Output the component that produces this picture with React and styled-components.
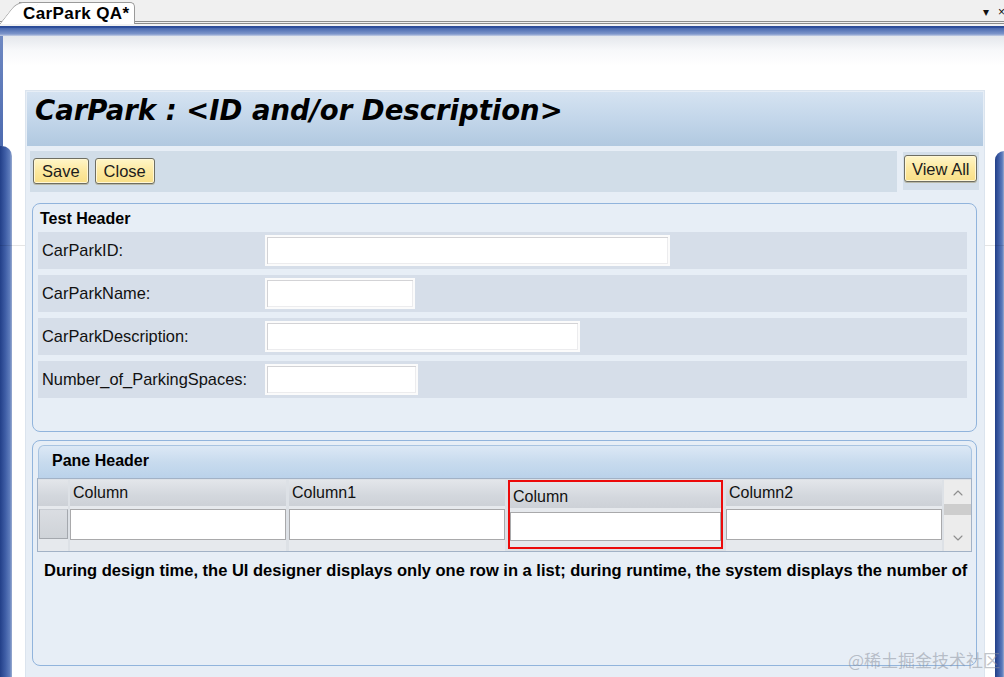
import React from "react";
import styled, { createGlobalStyle } from "styled-components";
import { ChevronUp, ChevronDown } from "lucide-react";

const GlobalStyle = createGlobalStyle`
  html, body {
    margin: 0;
    padding: 0;
  }
  body {
    width: 1004px;
    height: 677px;
    overflow: hidden;
    background: #fff;
    font-family: "Liberation Sans", Arial, sans-serif;
  }
  * {
    box-sizing: border-box;
  }
`;

const Screen = styled.div`
  position: relative;
  display: flex;
  flex-direction: column;
  height: 677px;
  overflow: hidden;
`;

const TabBar = styled.div`
  flex: none;
  height: 24px;
  padding-top: 2px;
  display: flex;
  align-items: flex-end;
  background: #f0f0f0;
  border-bottom: 3px double #8c8c8c;
`;

const Tab = styled.div`
  position: relative;
  z-index: 0;
  height: 22px;
  margin-left: 19px;
  margin-bottom: -3px;
  padding: 0 5px 0 4px;
  background: #fff;
  border: 1px solid #9a9a9a;
  border-left: none;
  border-bottom: none;
  border-radius: 0 5px 0 0;
  font-size: 17px;
  font-weight: bold;
  line-height: 22px;
  color: #000;
  letter-spacing: 0.4px;

  &::before {
    content: "";
    position: absolute;
    z-index: -1;
    left: -11px;
    top: -1px;
    bottom: 0;
    width: 22px;
    background: #fff;
    border-left: 1px solid #9a9a9a;
    border-top: 1px solid #9a9a9a;
    border-radius: 7px 0 0 0;
    transform: skewX(-38deg);
  }
`;

const TabControls = styled.div`
  margin-left: auto;
  align-self: center;
  margin-right: -4px;
  font-size: 12px;
  color: #111;
  letter-spacing: 3px;
  white-space: nowrap;
`;

const TopBand = styled.div`
  flex: none;
  height: 12px;
  background: linear-gradient(
    to bottom,
    #f2f2f2 0,
    #f2f2f2 2px,
    #2b4a96 2px,
    #2f4f9b 4px,
    #4767ae 4px,
    #7e96cb 10px,
    #c6cfe6 12px
  );
`;

const Body = styled.div`
  flex: 1;
  display: flex;
  min-height: 0;
  background: linear-gradient(to bottom, #e4e7ec 0, #f7f8fa 14px, #fff 30px);
`;

const LeftRail = styled.div`
  flex: none;
  width: 12px;
  display: flex;
  flex-direction: column;
`;

const RailNeck = styled.div`
  flex: none;
  width: 3px;
  height: 110px;
  background: linear-gradient(to bottom, #6e88c2, #4d6bb0);
`;

const RailBody = styled.div`
  flex: 1;
  background: linear-gradient(to right, #223f88, #3f5ea6 45%, #5d7bbb 80%, #9aacd0);
  border-radius: ${(p) => (p.$side === "left" ? "0 10px 0 0" : "10px 0 0 0")};
`;

const RightRail = styled.div`
  flex: none;
  width: 9px;
  padding-top: 115px;
  display: flex;
  flex-direction: column;
`;

const Main = styled.div`
  flex: 1;
  min-width: 0;
  padding: 54px 10px 0 13px;
`;

const Panel = styled.div`
  position: relative;
  z-index: 1;
  height: 100%;
  padding: 1px;
  background: #e7eef6;
  border: 1px solid #dbe4ee;
  border-bottom: none;
  display: flex;
  flex-direction: column;
`;

const TitleBar = styled.div`
  flex: none;
  height: 54px;
  padding: 1px 0 0 8px;
  background: linear-gradient(to bottom, #d5e3f1, #c3d6ea 50%, #b1c9e0);
`;

const Title = styled.h1`
  margin: 0;
  font-family: "DejaVu Sans", Verdana, sans-serif;
  font-size: 27.5px;
  line-height: 34px;
  font-weight: bold;
  font-style: italic;
  color: #000;
  white-space: nowrap;
`;

const ToolbarRow = styled.div`
  flex: none;
  display: flex;
  margin: 5px 4px 0 3px;
`;

const ActionsBar = styled.div`
  flex: 1;
  height: 41px;
  padding: 7px 3px;
  display: flex;
  align-items: flex-start;
  gap: 6px;
  background: #d1dde8;
`;

const SideBar = styled.div`
  flex: none;
  width: 76px;
  height: 38px;
  margin: 1px 0 0 6px;
  padding: 3px 1px;
  background: #d4dfea;
`;

const Button = styled.button`
  height: ${(p) => (p.$tall ? "27px" : "26px")};
  padding: 0 ${(p) => (p.$tall ? "7px" : "8px")};
  border: 1px solid #6e6e62;
  border-radius: 3px;
  background: linear-gradient(to bottom, #fff6c8, #fde9a0 50%, #f9df86);
  box-shadow: inset 0 0 0 1px #fff7d6, 0 1px 0 #b9b9a8;
  font-family: "Liberation Sans", Arial, sans-serif;
  font-size: 16.5px;
  line-height: 22px;
  color: #1c1c1c;
  cursor: pointer;
`;

const Groups = styled.div`
  flex: 1;
  display: flex;
  flex-direction: column;
  gap: 8px;
  margin: 11px 6px 0 5px;
`;

const Group = styled.section`
  flex: none;
  border: 1px solid #91b4dc;
  border-radius: 8px;
  background: #e7eef6;
  ${(p) => (p.$height ? `height: ${p.$height}px;` : "")}
`;

const FormGroup = styled(Group)`
  padding: 5px 9px 33px 5px;
`;

const GroupTitle = styled.div`
  margin: 0 0 3px 2px;
  font-size: 16px;
  line-height: 20px;
  font-weight: bold;
  color: #000;
`;

const Rows = styled.div`
  display: flex;
  flex-direction: column;
  gap: 6px;
`;

const FieldRow = styled.div`
  display: flex;
  align-items: center;
  height: 37px;
  background: #d6dee9;
`;

const FieldLabel = styled.label`
  flex: none;
  width: 227px;
  padding-left: 4px;
  font-size: 16.4px;
  color: #111;
`;

const TextInput = styled.input`
  height: 31px;
  width: ${(p) => p.$w}px;
  border: 2px solid #fbfbfb;
  background: #fff;
  box-shadow: inset 1px 1px 0 #d3d3d6, inset -1px -1px 0 #ececee;
  outline: none;
  font-family: inherit;
  font-size: 15px;
`;

const PaneHeader = styled.div`
  margin: 4px 4px 0 5px;
  height: 33px;
  padding-left: 13px;
  border: 1px solid #a9c4e1;
  border-bottom: none;
  border-radius: 6px 6px 0 0;
  background: linear-gradient(to bottom, #dce8f5, #c8dbee 50%, #bad2ea);
  font-size: 16px;
  font-weight: bold;
  line-height: 30px;
  color: #000;
`;

const Table = styled.div`
  display: flex;
  height: 74px;
  margin: 0 4px 0 4px;
  border: 1px solid #a2b2c6;
  padding-top: 1px;
  background: #dde1e6;
`;

const Column = styled.div`
  flex: none;
  width: ${(p) => p.$w}px;
  margin-left: ${(p) => p.$gap}px;
  display: flex;
  flex-direction: column;
  gap: 3px;
  padding-bottom: 10px;
  background: #e6e9ed;
  ${(p) =>
    p.$selected &&
    `
    align-self: flex-start;
    border: 2px solid #ec0a0a;
    gap: 4px;
    padding-bottom: 6px;
  `}
`;

const HeaderCell = styled.div`
  height: 26px;
  padding: ${(p) => (p.$selected ? "4px" : "2px")} 0 0 3px;
  background: linear-gradient(to bottom, #e3e6ea, #d3d7dd 60%, #cdd1d7);
  font-size: 16px;
  line-height: 22px;
  color: #111;
  white-space: nowrap;
`;

const CellInput = styled.input`
  height: ${(p) => (p.$selected ? "29px" : "31px")};
  width: 100%;
  border: 1px solid #a9a9ab;
  background: #fff;
  outline: none;
  font-family: inherit;
`;

const RowSelector = styled.div`
  height: 30px;
  margin-left: 1px;
  border: 1px solid #a4a8ae;
  border-top-color: #c8ccd2;
  background: linear-gradient(to bottom, #dadde2, #cfd3d8);
`;

const Scrollbar = styled.div`
  flex: none;
  width: 27px;
  margin-left: 2px;
  display: flex;
  flex-direction: column;
  align-items: center;
  padding-top: 5px;
  background: #ececec;
  color: #8e8e8e;
`;

const ScrollThumb = styled.div`
  align-self: stretch;
  height: 11px;
  margin: 3px 0 auto;
  background: #cdcdcd;
`;

const ScrollDown = styled.div`
  margin-bottom: 5px;
  line-height: 0;
`;

const Note = styled.p`
  margin: 8px 0 0 11px;
  font-size: 16.5px;
  line-height: 20px;
  font-weight: bold;
  color: #000;
  white-space: nowrap;
`;

const StrayLine = styled.div`
  position: absolute;
  left: 0;
  right: 0;
  top: 245px;
  height: 1px;
  background: rgba(0, 0, 0, 0.1);
`;

const Watermark = styled.div`
  position: absolute;
  z-index: 2;
  right: 4px;
  bottom: 5px;
  font-family: "Noto Sans CJK SC", "Liberation Sans", sans-serif;
  font-size: 17px;
  color: rgba(140, 146, 158, 0.55);
`;

const fields = [
  { label: "CarParkID:", width: 405 },
  { label: "CarParkName:", width: 150 },
  { label: "CarParkDescription:", width: 315 },
  { label: "Number_of_ParkingSpaces:", width: 153 },
];

const columns = [
  { name: "Column", width: 216, gap: 2 },
  { name: "Column1", width: 216, gap: 3 },
  { name: "Column", width: 215, gap: 3, selected: true },
  { name: "Column2", width: 216, gap: 3 },
];

export default function App() {
  return (
    <Screen>
      <GlobalStyle />
      <TabBar>
        <Tab>CarPark QA*</Tab>
        <TabControls>▾ ×</TabControls>
      </TabBar>
      <TopBand />
      <Body>
        <LeftRail>
          <RailNeck />
          <RailBody $side="left" />
        </LeftRail>
        <Main>
          <Panel>
            <TitleBar>
              <Title>CarPark : &lt;ID and/or Description&gt;</Title>
            </TitleBar>
            <ToolbarRow>
              <ActionsBar>
                <Button>Save</Button>
                <Button>Close</Button>
              </ActionsBar>
              <SideBar>
                <Button $tall>View All</Button>
              </SideBar>
            </ToolbarRow>
            <Groups>
              <FormGroup>
                <GroupTitle>Test Header</GroupTitle>
                <Rows>
                  {fields.map((f) => (
                    <FieldRow key={f.label}>
                      <FieldLabel>{f.label}</FieldLabel>
                      <TextInput $w={f.width} />
                    </FieldRow>
                  ))}
                </Rows>
              </FormGroup>
              <Group $height={226}>
                <PaneHeader>Pane Header</PaneHeader>
                <Table>
                  <Column $w={30} $gap={0}>
                    <HeaderCell />
                    <RowSelector />
                  </Column>
                  {columns.map((c, i) => (
                    <Column key={i} $w={c.width} $gap={c.gap} $selected={c.selected}>
                      <HeaderCell $selected={c.selected}>{c.name}</HeaderCell>
                      <CellInput $selected={c.selected} />
                    </Column>
                  ))}
                  <Scrollbar>
                    <ChevronUp size={16} strokeWidth={1.6} />
                    <ScrollThumb />
                    <ScrollDown>
                      <ChevronDown size={16} strokeWidth={1.6} />
                    </ScrollDown>
                  </Scrollbar>
                </Table>
                <Note>
                  During design time, the UI designer displays only one row in a list; during
                  runtime, the system displays the number of
                </Note>
              </Group>
            </Groups>
          </Panel>
        </Main>
        <RightRail>
          <RailBody $side="right" />
        </RightRail>
      </Body>
      <StrayLine />
      <Watermark>@稀土掘金技术社区</Watermark>
    </Screen>
  );
}
